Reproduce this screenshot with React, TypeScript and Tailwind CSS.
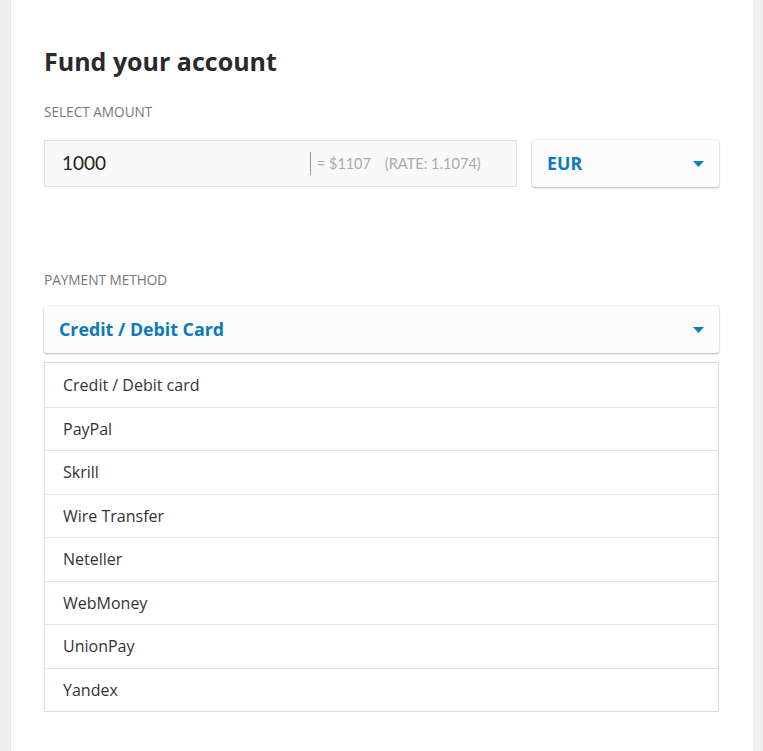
import React from "react";

const methods = [
  "Credit / Debit card",
  "PayPal",
  "Skrill",
  "Wire Transfer",
  "Neteller",
  "WebMoney",
  "UnionPay",
  "Yandex",
];

function Caret() {
  return (
    <svg width="11" height="6" viewBox="0 0 11 6" className="shrink-0">
      <path d="M0 0 L11 0 L5.5 6 Z" fill="#0d7bc1" />
    </svg>
  );
}

export default function App() {
  return (
    <div className="flex h-[751px] w-[763px] bg-[#efefef] font-['Open_Sans',sans-serif]">
      <div className="ml-[10px] w-[743px] border-l border-[#e4e4e4] bg-white pl-[33px] pr-[34px]">
        <h1 className="mt-[44px] text-[25px] font-bold leading-[34px] text-[#2a2a2a]">
          Fund your account
        </h1>
        <div className="mt-[25px] text-[13.6px] leading-[18px] text-[#777]">SELECT AMOUNT</div>
        <div className="mt-[19px] flex gap-[15px]">
          <div className="flex h-[47px] w-[473px] items-center border border-[#dedede] bg-[#f9f9f9] pl-[17px] font-['Lato',sans-serif]">
            <span className="w-[248px] text-[19px] text-[#222]">1000</span>
            <span className="h-[23px] w-px bg-[#999]" />
            <span className="ml-[6px] text-[14.4px] text-[#aaa]">= $1107</span>
            <span className="ml-[14px] text-[14.6px] text-[#aaa]">(RATE: 1.1074)</span>
          </div>
          <div className="flex h-[47px] w-[187px] items-center justify-between rounded-[3px] bg-[#fcfcfc] pl-[15px] pr-[15px] shadow-[0_1px_2px_rgba(0,0,0,0.25),0_0_0_1px_rgba(0,0,0,0.04)]">
            <span className="text-[17.8px] font-bold text-[#0b79bd]">EUR</span>
            <Caret />
          </div>
        </div>
        <div className="mt-[84px] text-[13.6px] leading-[18px] text-[#777]">PAYMENT METHOD</div>
        <div className="mt-[17px] flex h-[47px] w-[675px] items-center justify-between rounded-[3px] bg-[#fcfcfc] pl-[15px] pr-[15px] shadow-[0_1px_2px_rgba(0,0,0,0.25),0_0_0_1px_rgba(0,0,0,0.04)]">
          <span className="text-[17.8px] font-bold text-[#0b79bd]">Credit / Debit Card</span>
          <Caret />
        </div>
        <div className="mt-[9px] w-[675px] border border-[#dcdcdc] bg-white">
          {methods.map((m, i) => (
            <div
              key={m}
              className={`flex h-[43.5px] items-center pl-[18px] text-[16px] text-[#333] ${
                i > 0 ? "border-t border-[#e2e2e2]" : ""
              }`}
            >
              {m}
            </div>
          ))}
        </div>
      </div>
    </div>
  );
}
